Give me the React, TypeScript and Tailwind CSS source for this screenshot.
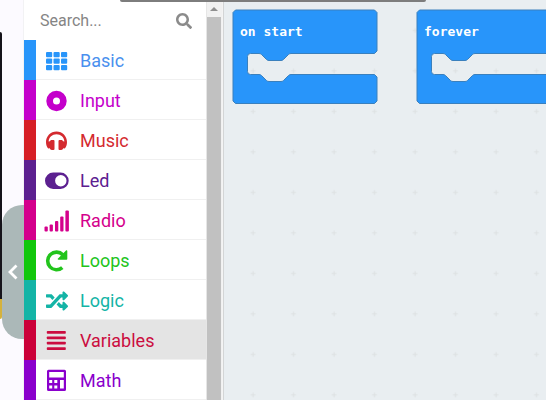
import type { ReactNode } from "react";
import { FaRandom, FaSearch } from "react-icons/fa";

type Category = {
  name: string;
  strip: string;
  text: string;
  icon: ReactNode;
  selected?: boolean;
};

function Glyph({ children }: { children: ReactNode }) {
  return (
    <svg viewBox="0 0 24 24" className="h-6 w-6 overflow-visible" fill="currentColor" aria-hidden="true">
      {children}
    </svg>
  );
}

const gridIcon = (
  <Glyph>
    {[3, 9.5, 16].map((y) =>
      [1, 8.5, 16].map((x) => <rect key={`${x}-${y}`} x={x} y={y} width="6.2" height="5.2" rx="1" />),
    )}
  </Glyph>
);

const discIcon = (
  <Glyph>
    <path
      fillRule="evenodd"
      d="M11.500 1.800a10.200 10.200 0 1 0 0 20.400a10.200 10.200 0 1 0 0-20.400zM11.500 8.500a3.500 3.500 0 1 1 0 7a3.500 3.500 0 1 1 0-7z"
    />
  </Glyph>
);

const headphonesIcon = (
  <Glyph>
    <path d="M11.500 2.500C5.600 2.500 1 7.200 1 13c0 2.700.8 5 2.200 6.600l1.600-.3c.3 1.100 1 1.700 2 1.700h1.800c.5 0 .9-.4.9-.9v-8.200c0-.5-.4-.9-.9-.9H6.800c-.9 0-1.500.5-1.800 1.200l-1.400.3C3.900 8.200 7.200 5.200 11.500 5.200s7.600 3 7.900 7.300l-1.400-.3c-.3-.7-.9-1.200-1.800-1.200h-1.800c-.5 0-.9.4-.9.9v8.200c0 .5.4.9.9.9h1.800c1 0 1.700-.6 2-1.700l1.600.3C21.200 18 22 15.700 22 13 22 7.200 17.400 2.500 11.500 2.500z" />
  </Glyph>
);

const toggleIcon = (
  <Glyph>
    <path
      fillRule="evenodd"
      d="M8.200 3.500h7.300a8.200 8.200 0 0 1 0 16.400H8.200a8.200 8.200 0 0 1 0-16.400zM15.800 6a5.700 5.700 0 1 0 0 11.400a5.700 5.700 0 1 0 0-11.400z"
    />
  </Glyph>
);

const signalIcon = (
  <Glyph>
    <rect x="-0.500" y="17.500" width="3.300" height="5" rx="1" />
    <rect x="4.600" y="15.500" width="3.300" height="7" rx="1" />
    <rect x="10" y="12" width="3.300" height="10.500" rx="1" />
    <rect x="15.200" y="7.500" width="3.300" height="15" rx="1" />
    <rect x="20.400" y="1.500" width="3.500" height="21" rx="1" />
  </Glyph>
);

const repeatIcon = (
  <Glyph>
    <path
      d="M17.800 5.800A8.800 8.800 0 1 0 17.300 18.600"
      fill="none"
      stroke="currentColor"
      strokeWidth="3.600"
    />
    <path d="M22.300 2v8c0 .5-.3.800-.8.800h-8c-.8 0-1.100-.8-.5-1.300l8-8c.5-.5 1.300-.2 1.300.5z" />
  </Glyph>
);

const linesIcon = (
  <Glyph>
    {[2, 7.4, 12.800, 18.200].map((y) => (
      <rect key={y} x="1.800" y={y} width="19" height="2.800" rx="0.800" />
    ))}
  </Glyph>
);

const calculatorIcon = (
  <Glyph>
    <path
      fillRule="evenodd"
      d="M3.500.800h16a1.500 1.500 0 0 1 1.500 1.500v18.200a1.500 1.500 0 0 1-1.500 1.500h-16a1.500 1.500 0 0 1-1.500-1.500V2.300A1.500 1.500 0 0 1 3.500.800zM4.200 3v5.500h14.600V3zM4.200 11v3h3v-3zM9.300 11v3h3v-3zM4.200 16.500v3h3v-3zM9.300 16.500v3h3v-3zM15 11v8.500h3.800V11z"
    />
  </Glyph>
);

const categories: Category[] = [
  { name: "Basic", strip: "bg-[#2895fa]", text: "text-[#4a90ee]", icon: <span className="text-[#2895fa]">{gridIcon}</span> },
  { name: "Input", strip: "bg-[#c400cb]", text: "text-[#c400cb]", icon: discIcon },
  { name: "Music", strip: "bg-[#d61f26]", text: "text-[#d42a2f]", icon: headphonesIcon },
  { name: "Led", strip: "bg-[#5c2090]", text: "text-[#5c2090]", icon: toggleIcon },
  { name: "Radio", strip: "bg-[#d4008c]", text: "text-[#d4008c]", icon: signalIcon },
  { name: "Loops", strip: "bg-[#12c70c]", text: "text-[#22c41c]", icon: repeatIcon },
  { name: "Logic", strip: "bg-[#14b4a6]", text: "text-[#14b4a6]", icon: <FaRandom className="h-[22px] w-[22px]" aria-hidden="true" /> },
  { name: "Variables", strip: "bg-[#cb0039]", text: "text-[#cb0d40]", icon: linesIcon, selected: true },
  { name: "Math", strip: "bg-[#8a00cc]", text: "text-[#8a00cc]", icon: calculatorIcon },
];

function Toolbox() {
  return (
    <div className="flex min-w-0 flex-1 flex-col bg-white">
      <div className="flex h-10 shrink-0 items-center pt-0.5 pr-3.5 pl-4">
        <input
          type="text"
          aria-label="Search"
          placeholder="Search..."
          className="min-w-0 flex-1 bg-transparent text-base text-gray-700 outline-none placeholder:text-[#858585]"
        />
        <FaSearch className="h-4 w-4 text-[#8b8b8b]" aria-hidden="true" />
      </div>
      <nav aria-label="Block categories">
        {categories.map((category) => (
          <button
            key={category.name}
            type="button"
            className={`flex h-10 w-full items-stretch text-left text-lg ${category.text} ${category.selected ? "bg-[#e4e4e4]" : "bg-white"}`}
          >
            <span className={`w-3 shrink-0 ${category.strip}`} />
            <span className="flex flex-1 items-center gap-2.5 border-b border-[#f0f0f0] pt-[3px] pl-2">
              <span className="flex w-[26px] justify-center">{category.icon}</span>
              {category.name}
            </span>
          </button>
        ))}
      </nav>
    </div>
  );
}

function ScrollTrack() {
  return (
    <div className="flex w-4 shrink-0 flex-col border-l border-[#e6e6e6] bg-[#f1f1f1] pr-px" aria-hidden="true">
      <svg viewBox="0 0 14 17" className="h-[17px] w-full shrink-0">
        <path d="M3 11l4-4l4 4z" fill="#8f8f8f" />
      </svg>
      <div className="flex-1 bg-[#c1c1c1]" />
    </div>
  );
}

function EventBlock({ title }: { title: string }) {
  return (
    <svg width="146" height="96" viewBox="0 0 146 96" className="shrink-0">
      <path
        d="M3.500 1H142.500l2.500 2.500V42L142.500 44.500H59q-1.500 0-2.500 1l-5 5q-1 1-2.500 1H37q-1.500 0-2.500-1l-5-5q-1-1-2.500-1H18.500q-3 0-3 3V62.500q0 3 3 3H27q1.500 0 2.500 1l5 5q1 1 2.500 1H49q1.500 0 2.500-1l5-5q1-1 2.500-1H142.500l2.500 2.500V92L142.500 94.500H3.500L1 92V3.500z"
        fill="#2895fa"
        stroke="#3a80bd"
      />
      <text
        x="8"
        y="27"
        fill="white"
        className="font-['DejaVu_Sans_Mono',monospace] text-[13px] font-bold"
      >
        {title}
      </text>
    </svg>
  );
}

function Workspace() {
  return (
    <main className="relative min-w-0 flex-1 overflow-hidden border-l border-[#d3d5d6] bg-[#e9eef1]">
      <svg className="absolute inset-0 h-full w-full" aria-hidden="true">
        <defs>
          <pattern id="dots" x="9" y="10" width="40.500" height="40.500" patternUnits="userSpaceOnUse">
            <path d="M17.500 20.500h5M20 18v5" stroke="#dde1e2" fill="none" />
          </pattern>
        </defs>
        <rect width="100%" height="100%" fill="url(#dots)" />
      </svg>
      <div className="relative flex gap-[38px] pt-[9px] pl-2">
        <EventBlock title="on start" />
        <EventBlock title="forever" />
      </div>
    </main>
  );
}

function SimulatorEdge() {
  return (
    <aside className="flex w-6 shrink-0 items-stretch border-r border-[#f2f2f4] bg-[#fcfaff]">
      <div className="flex w-0.5 shrink-0 flex-col pt-8">
        <div className="h-[267px] rounded-tr bg-[#15131a]" />
        <div className="h-5 rounded-br bg-[#d5b23c]" />
      </div>
      <div className="flex-1 pt-[205px]">
        <button
          type="button"
          aria-label="Collapse simulator"
          className="flex h-[134px] w-[22px] items-center justify-center rounded-l-[20px] bg-[#abb8b8] text-white"
        >
          <svg viewBox="0 0 10 16" className="h-4 w-2.5" fill="none" aria-hidden="true">
            <path d="M8.500 1.500L2 8l6.500 6.500" stroke="currentColor" strokeWidth="2.800" />
          </svg>
        </button>
      </div>
    </aside>
  );
}

export default function App() {
  return (
    <div className="relative flex h-screen overflow-hidden bg-white font-[Roboto,sans-serif]">
      <SimulatorEdge />
      <div className="flex w-[199px] shrink-0 bg-[#f4f4f4] pr-px">
        <Toolbox />
        <ScrollTrack />
      </div>
      <Workspace />
      <div className="absolute inset-x-0 top-0 flex justify-center">
        <div className="h-0.5 w-[56%] rounded-b-full bg-[#7d7d7d]" />
      </div>
    </div>
  );
}
